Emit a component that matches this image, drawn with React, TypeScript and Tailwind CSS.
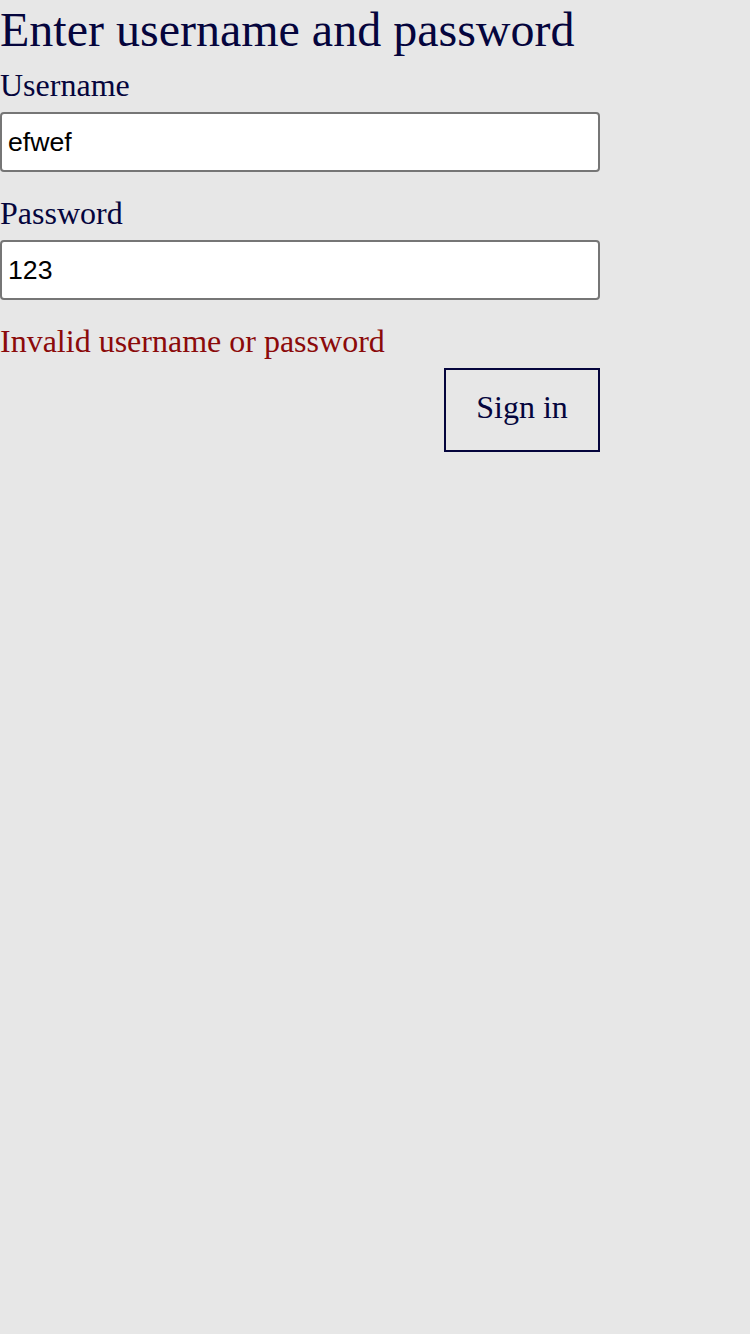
export default function App() {
  return (
    <div className="min-h-[1334px] bg-[#e7e7e7] font-['Liberation_Serif',serif] text-[#05053d]">
      <form className="flex w-[600px] flex-col" onSubmit={(e) => e.preventDefault()}>
        <h1 className="pt-[2px] text-[48px] leading-[56px]">Enter username and password</h1>

        <label className="mt-[9px] flex flex-col gap-[8px]">
          <span className="text-[32px] leading-[37px]">Username</span>
          <input
            type="text"
            defaultValue="efwef"
            className="h-[60px] w-full rounded-[4px] border-2 border-[#767676] bg-white px-[6px] font-['Liberation_Sans',sans-serif] text-[26.67px] text-black"
          />
        </label>

        <label className="mt-[23px] flex flex-col gap-[8px]">
          <span className="text-[32px] leading-[37px]">Password</span>
          <input
            type="text"
            defaultValue="123"
            className="h-[60px] w-full rounded-[4px] border-2 border-[#767676] bg-white px-[6px] font-['Liberation_Sans',sans-serif] text-[26.67px] text-black"
          />
        </label>

        <p className="mt-[23px] text-[32px] leading-[37px] text-[#8b0a0a]">Invalid username or password</p>

        <div className="mt-[8px] flex justify-end">
          <button
            type="submit"
            className="h-[84px] w-[156px] border-2 border-[#05053d] pb-[6px] text-[32px] leading-[37px]"
          >
            Sign in
          </button>
        </div>
      </form>
    </div>
  );
}
